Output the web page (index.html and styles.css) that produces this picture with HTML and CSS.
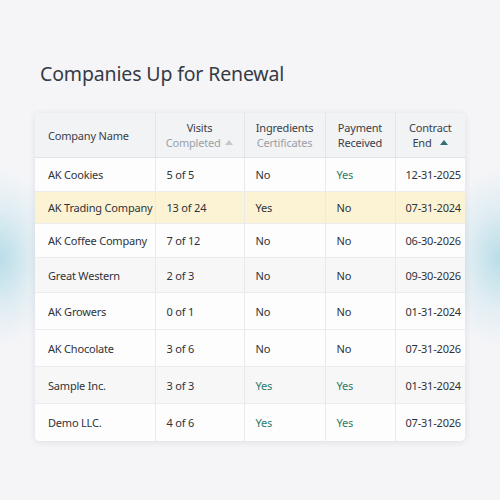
FILE: index.html
```html
<!DOCTYPE html>
<html>
<head>
<meta charset="utf-8">
<link rel="stylesheet" href="styles.css">
</head>
<body>
<div class="page">
  <h1 class="title">Companies Up for Renewal</h1>
  <div class="card">
    <table class="grid">
      <colgroup>
        <col class="c1"><col class="c2"><col class="c3"><col class="c4"><col class="c5">
      </colgroup>
      <thead>
        <tr>
          <th class="left">Company Name</th>
          <th>Visits<br><span class="sub">Completed <span class="caret grey"></span></span></th>
          <th>Ingredients<br><span class="sub">Certificates</span></th>
          <th>Payment<br>Received</th>
          <th>Contract<br>End <span class="caret teal"></span></th>
        </tr>
      </thead>
      <tbody>
        <tr class="r1 short"><td>AK Cookies</td><td>5 of 5</td><td>No</td><td class="yes">Yes</td><td>12-31-2025</td></tr>
        <tr class="hl"><td>AK Trading Company</td><td>13 of 24</td><td>Yes</td><td>No</td><td>07-31-2024</td></tr>
        <tr class="r1 short"><td>AK Coffee Company</td><td>7 of 12</td><td>No</td><td>No</td><td>06-30-2026</td></tr>
        <tr class="r2 mid"><td>Great Western</td><td>2 of 3</td><td>No</td><td>No</td><td>09-30-2026</td></tr>
        <tr class="r1 tall"><td>AK Growers</td><td>0 of 1</td><td>No</td><td>No</td><td>01-31-2024</td></tr>
        <tr class="r1 tall"><td>AK Chocolate</td><td>3 of 6</td><td>No</td><td>No</td><td>07-31-2026</td></tr>
        <tr class="r2 tall"><td>Sample Inc.</td><td>3 of 3</td><td class="yes">Yes</td><td class="yes">Yes</td><td>01-31-2024</td></tr>
        <tr class="r1 last"><td>Demo LLC.</td><td>4 of 6</td><td class="yes">Yes</td><td class="yes">Yes</td><td>07-31-2026</td></tr>
      </tbody>
    </table>
  </div>
</div>
</body>
</html>
```
FILE: styles.css
```css
html, body {
  margin: 0;
  padding: 0;
}
body {
  width: 500px;
  height: 500px;
  overflow: hidden;
  font-family: "Noto Sans", "Open Sans", sans-serif;
  color: #2f3339;
  background:
    radial-gradient(ellipse 60px 90px at 0px 258px, rgba(170, 215, 228, 0.8), rgba(200, 228, 236, 0.45) 55%, rgba(245, 246, 248, 0) 100%),
    radial-gradient(ellipse 60px 90px at 500px 258px, rgba(170, 215, 228, 0.8), rgba(200, 228, 236, 0.45) 55%, rgba(245, 246, 248, 0) 100%),
    #f5f5f8;
}
.page {
  padding: 58px 35px 0 35px;
}
.title {
  margin: 0 0 23px 5px;
  font-size: 19.5px;
  font-weight: 400;
  color: #363b44;
  line-height: 32px;
  letter-spacing: -0.15px;
}
.card {
  width: 430px;
  background: #fff;
  border-radius: 5px;
  box-shadow: 0 1px 6px rgba(40, 60, 80, 0.12);
  overflow: hidden;
}
.grid {
  width: 430px;
  border-collapse: collapse;
  table-layout: fixed;
  font-size: 11px;
  letter-spacing: -0.2px;
}
.c1 { width: 120px; }
.c2 { width: 89px; }
.c3 { width: 81px; }
.c4 { width: 70px; }
.c5 { width: 70px; }
th {
  height: 44px;
  padding: 0 4px;
  background: #f2f3f5;
  font-weight: 400;
  color: #3b4049;
  line-height: 15px;
  text-align: center;
  border-right: 1px solid #e3e5e8;
  border-bottom: 1px solid #e1e3e6;
}
th.left {
  text-align: left;
  padding-left: 13px;
}
th:last-child, td:last-child { border-right: none; }
.sub { color: #9ba1a8; }
.caret {
  display: inline-block;
  width: 0;
  height: 0;
  border-left: 4px solid transparent;
  border-right: 4px solid transparent;
  margin-left: 2px;
  vertical-align: 2px;
}
.caret.grey { border-bottom: 5px solid #c4c8cc; }
.caret.teal { border-bottom: 5px solid #2f6f72; margin-left: 6px; }
td {
  height: 34px;
  padding: 0 0 0 11px;
  border-right: 1px solid #e8e9ec;
  border-bottom: 1px solid #ececee;
  white-space: nowrap;
  color: #2f3339;
}
td:first-child { padding-left: 13px; }
td:last-child { padding-left: 10px; }
tr.r1 td { background: #fdfdfd; }
tr.r2 td { background: #f7f7f8; }
tr.hl td { background: #fcf3d4; height: 31px; }
tr.short td { height: 33px; }
tr.mid td { height: 34px; }
tr.tall td { height: 36px; }
tr.last td { border-bottom: none; height: 37px; }
td.yes { color: #2c7c6c; }
```
